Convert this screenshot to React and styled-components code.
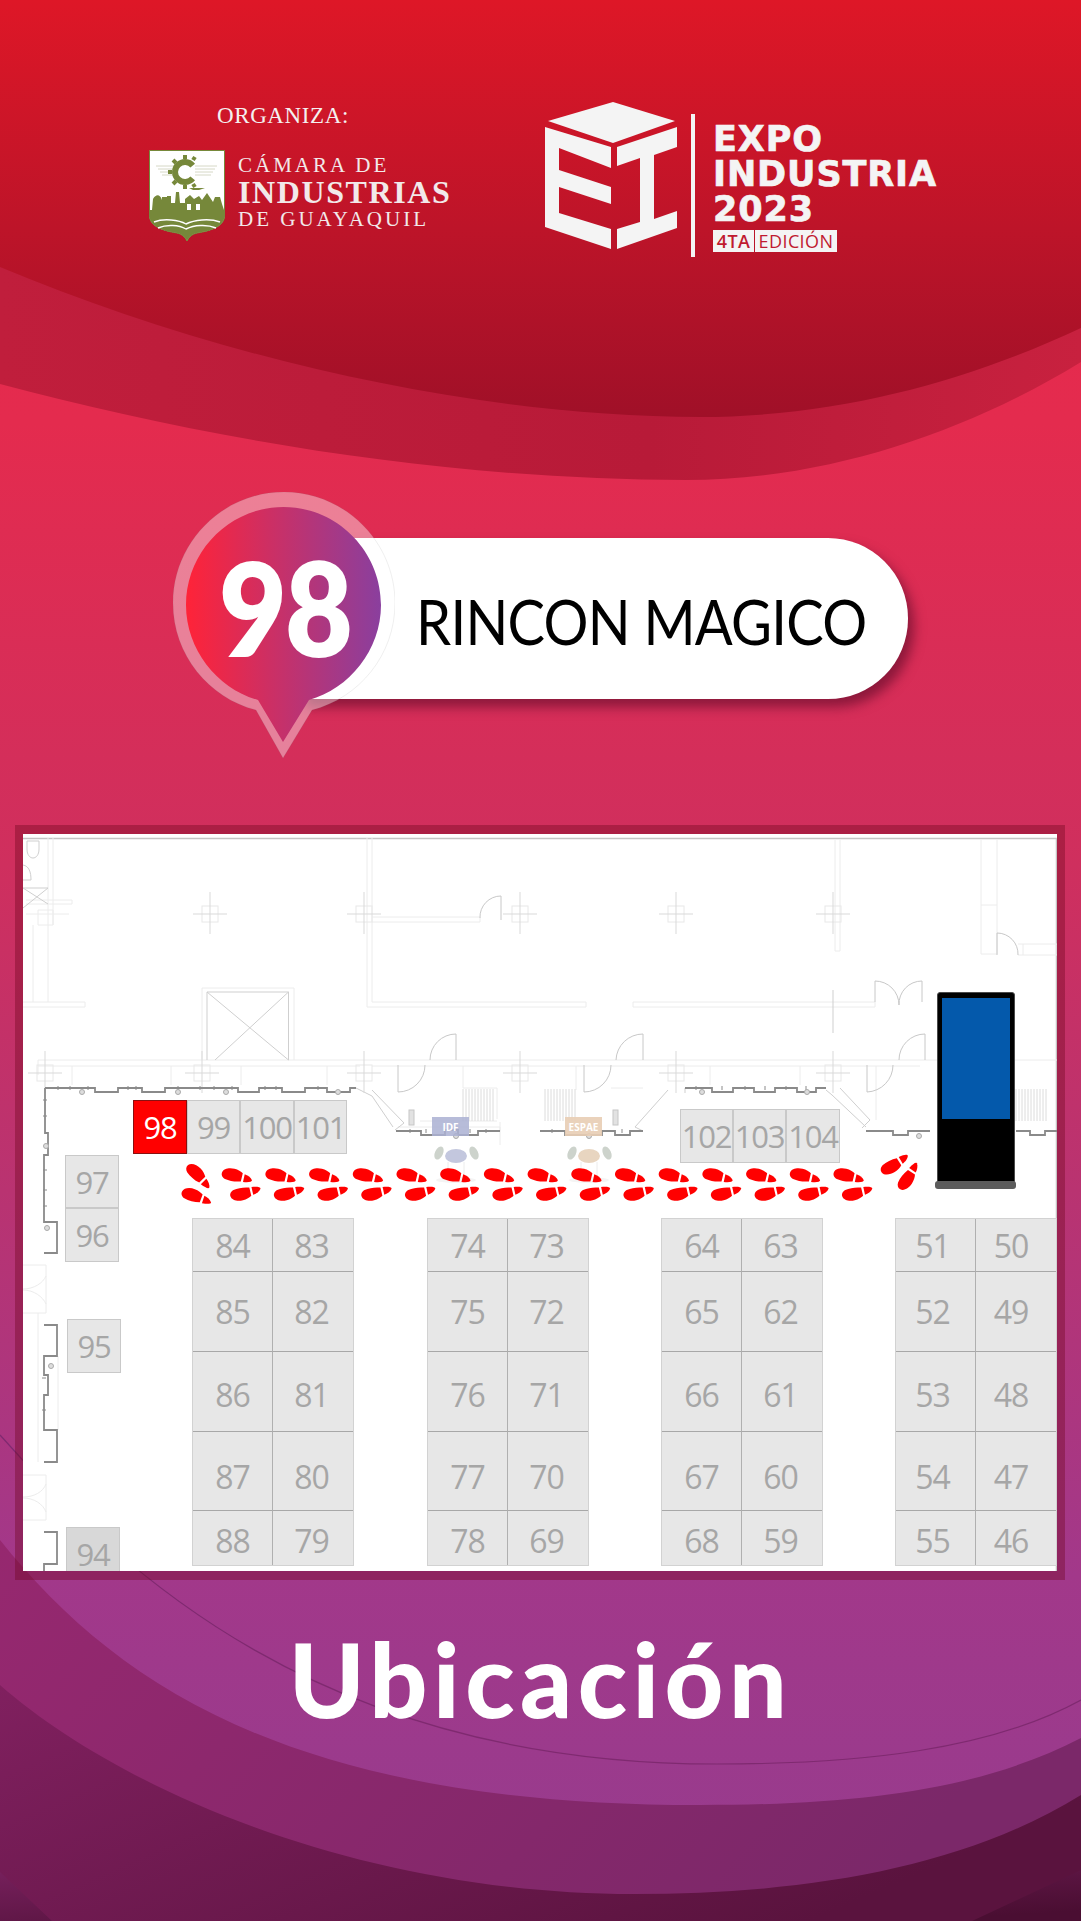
import React from "react";
import styled, { createGlobalStyle } from "styled-components";

const GlobalStyle = createGlobalStyle`
    html, body {
        margin: 0;
        padding: 0;
        background: #fff;
    }
`

const Page = styled.div`
    position: relative;
    width: 1081px;
    height: 1921px;
    overflow: hidden;
    display: flex;
    flex-direction: column;
    background: linear-gradient(180deg, #e82a4c 0%, #e42b4e 22%, #cf2f5e 45%, #b93371 62%, #a2388a 82%, #953c8e 100%);
    font-family: "Open Sans", sans-serif;
`

const Backdrop = styled.svg`
    position: absolute;
    inset: 0;
`

/* header */
const Header = styled.header`
    position: relative;
    height: 300px;
    box-sizing: border-box;
    padding: 101px 0 0 149px;
    display: flex;
    align-items: flex-start;
    gap: 74px;
`

const Organizer = styled.div`
    width: 322px;
    display: flex;
    flex-direction: column;
`

const OrganizerLabel = styled.div`
    margin-left: 68px;
    height: 30px;
    font-family: "Liberation Serif", serif;
    font-size: 23px;
    line-height: 30px;
    letter-spacing: 0.6px;
    color: #f4f0f0;
`

const OrganizerBody = styled.div`
    margin-top: 19px;
    display: flex;
    gap: 13px;
`

const OrganizerName = styled.div`
    display: flex;
    flex-direction: column;
    padding-top: 2px;
    font-family: "Liberation Serif", serif;
    color: #f2e9ea;
    white-space: nowrap;
`

const NameLine = styled.div`
    font-size: ${(props) => props.$size}px;
    line-height: ${(props) => props.$line}px;
    letter-spacing: ${(props) => props.$spacing}px;
    font-weight: ${(props) => (props.$bold ? 700 : 400)};
`

const Expo = styled.div`
    display: flex;
    align-items: flex-start;
    margin-top: 1px;
`

const ExpoText = styled.div`
    margin: 20px 0 0 14px;
    display: flex;
    flex-direction: column;
    color: #f4f4f4;
    font-family: "DejaVu Sans", sans-serif;
    font-weight: 700;
    font-size: 35px;
    line-height: 35px;
    letter-spacing: 0.9px;
    -webkit-text-stroke: 0.7px #f4f4f4;
`

const Edition = styled.div`
    margin-top: 3px;
    display: flex;
    gap: 1px;
    font-family: "Open Sans", sans-serif;
    font-size: 18px;
    letter-spacing: 0.4px;
    color: #c01a30;
    -webkit-text-stroke: 0;
`

const EditionBox = styled.span`
    width: ${(props) => props.$width}px;
    height: 22px;
    line-height: 22px;
    text-align: center;
    font-weight: ${(props) => (props.$strong ? 600 : 400)};
    background: #f4f4f4;
`

/* name pill */
const Pill = styled.section`
    position: relative;
    width: 608px;
    height: 161px;
    margin: 238px 0 0 300px;
    box-sizing: border-box;
    padding: 4px 0 0 116px;
    display: flex;
    align-items: center;
    background: #fff;
    border-radius: 0 80px 80px 0;
    box-shadow: 6px 8px 12px rgba(90, 10, 40, 0.6);
`

const StandName = styled.div`
    font-family: "Lato", sans-serif;
    font-size: 62px;
    letter-spacing: -0.8px;
    color: #000;
    white-space: nowrap;
    transform: scaleX(0.905);
    transform-origin: left center;
`

const Bubble = styled.div`
    position: absolute;
    left: -127px;
    top: -46px;
    width: 222px;
    height: 266px;
`

const BubbleShape = styled.svg`
    position: absolute;
    inset: 0;
`

const BubbleNumber = styled.div`
    position: absolute;
    left: 1px;
    top: 4px;
    width: 222px;
    height: 222px;
    display: flex;
    align-items: center;
    justify-content: center;
    font-family: "Lato", sans-serif;
    font-weight: 800;
    font-size: 130px;
    letter-spacing: -2px;
    color: #fff;
    transform: scaleX(0.9);
`

/* map */
const Frame = styled.section`
    position: relative;
    width: 1050px;
    height: 755px;
    margin: 126px 0 0 15px;
    box-sizing: border-box;
    padding: 9px 8px;
    background: rgba(110, 5, 30, 0.38);
`

const Map = styled.div`
    position: relative;
    width: 1034px;
    height: 737px;
    overflow: hidden;
    background: #fff;
`

const Plan = styled.svg`
    position: absolute;
    inset: 0;
`

const Booth = styled.div`
    position: absolute;
    left: ${(props) => props.$x - 23}px;
    top: ${(props) => props.$y - 834}px;
    width: ${(props) => props.$w}px;
    height: ${(props) => props.$h}px;
    box-sizing: border-box;
    display: flex;
    align-items: center;
    justify-content: center;
    background: ${(props) => (props.$active ? "#ff0000" : props.$dark ? "#d8d8d8" : "#e7e7e7")};
    border: 1px solid ${(props) => (props.$active ? "#8a1010" : "#c9c9c9")};
    color: ${(props) => (props.$active ? "#fff" : "#a6a6a6")};
    font-size: 31px;
    letter-spacing: -1.2px;
`

const BoothBlock = styled.div`
    position: absolute;
    left: ${(props) => props.$x - 23}px;
    top: ${(props) => props.$y - 834}px;
    display: grid;
    grid-template-columns: 80px 80px;
    grid-template-rows: 53px 80px 80px 79px 54px;
    background: #e7e7e7;
    border: 1px solid #d2d2d2;
`

const Cell = styled.div`
    display: flex;
    align-items: center;
    justify-content: center;
    box-sizing: border-box;
    padding-top: ${(props) => props.$drop}px;
    padding-right: ${(props) => props.$inset}px;
    border-right: ${(props) => (props.$left ? "1px solid #b0b0b0" : "0")};
    border-bottom: ${(props) => (props.$last ? "0" : "1px solid #a8a8a8")};
    color: #a6a6a6;
    font-size: 32px;
    letter-spacing: -1px;
`

const ServiceTag = styled.div`
    position: absolute;
    left: ${(props) => props.$x - 23}px;
    top: 283px;
    width: 37px;
    height: 19px;
    display: flex;
    align-items: center;
    justify-content: center;
    background: ${(props) => props.$color};
    color: #fff;
    font-size: 10px;
    font-weight: 700;
`

const Kiosk = styled.div`
    position: absolute;
    left: 914px;
    top: 158px;
    width: 78px;
    height: 190px;
    box-sizing: border-box;
    padding: 5px 4px 0;
    background: #000;
    border: 1px solid #4a4a4a;
    border-radius: 3px 3px 0 0;
`

const KioskScreen = styled.div`
    height: 121px;
    background: #0459ab;
`

const KioskBase = styled.div`
    position: absolute;
    left: 912px;
    top: 347px;
    width: 81px;
    height: 8px;
    border-radius: 3px;
    background: #5c5c5c;
`

const Title = styled.h1`
    position: relative;
    margin: 34px 0 0;
    text-align: center;
    font-family: "Lato", sans-serif;
    font-weight: 900;
    font-size: 102px;
    line-height: 130px;
    letter-spacing: 5.500px;
    color: #fff;
`

const sideBooths = [
    { n: "98", x: 133, y: 1100, w: 54, h: 54, active: true },
    { n: "99", x: 187, y: 1100, w: 53, h: 54 },
    { n: "100", x: 240, y: 1100, w: 54, h: 54 },
    { n: "101", x: 294, y: 1100, w: 53, h: 54 },
    { n: "102", x: 680, y: 1109, w: 53, h: 54 },
    { n: "103", x: 733, y: 1109, w: 53, h: 54 },
    { n: "104", x: 786, y: 1109, w: 54, h: 54 },
    { n: "97", x: 65, y: 1155, w: 54, h: 53 },
    { n: "96", x: 65, y: 1208, w: 54, h: 54 },
    { n: "95", x: 67, y: 1319, w: 54, h: 54 },
    { n: "94", x: 66, y: 1527, w: 54, h: 54, dark: true },
]

const blocks = [
    { x: 192, y: 1218, inset: [0, 3], rows: [[84, 83], [85, 82], [86, 81], [87, 80], [88, 79]] },
    { x: 427, y: 1218, inset: [0, 3], rows: [[74, 73], [75, 72], [76, 71], [77, 70], [78, 69]] },
    { x: 661, y: 1218, inset: [0, 3], rows: [[64, 63], [65, 62], [66, 61], [67, 60], [68, 59]] },
    { x: 895, y: 1218, inset: [6, 10], rows: [[51, 50], [52, 49], [53, 48], [54, 47], [55, 46]] },
]

// the numbers do not sit quite in the middle of the taller rows
const rowDrop = [0, 0, 6, 10, 4]

const columnMarks = [
    [210, 914], [364, 914], [520, 914], [676, 914], [833, 914],
    [45, 1073], [202, 1073], [364, 1073], [520, 1073], [676, 1073], [833, 1073],
]

// door: hinge post and swing arc
const doors = [
    "M456 1034V1060M456 1034A26 26 0 0 0 430 1060",
    "M398 1065V1092M398 1092A27 27 0 0 0 425 1065",
    "M643 1034V1060M643 1034A27 27 0 0 0 616 1060",
    "M584 1065V1092M584 1092A27 27 0 0 0 611 1065",
    "M925 1034V1060M925 1034A26 26 0 0 0 899 1060",
    "M867 1065V1092M867 1092A27 27 0 0 0 893 1065",
    "M875 981V1002M875 981A24 24 0 0 1 899 1005",
    "M922 981V1002M922 981A23 23 0 0 0 899 1005",
    "M997 933V955M997 933A21 21 0 0 1 1018 955",
    "M501 896V920M501 896A21 21 0 0 0 480 918",
]

const faintLines = [
    "M23 1002H85V1007H23",
    "M367 838V1007H586V1002H372V838",
    "M633 1002H875V1007H633Z",
    "M372 917H480V922H372",
    "M33 925V1002M48 838V1002M53 838V925",
    "M26 914H69M38 910H53V925H38Z",
    "M38 1060H1057M38 1060V1075M38 1066H360M372 1066H920",
    "M202 988H294V1060M202 988V1060",
    "M835 840V951H840V840M981 840V954H997V840M981 905H997",
    "M1018 944H1057M1018 955H1057V944M1023 944V955",
    "M463 1066V1088H497V1119M576 1066V1090M611 1088H643M876 1066V1120",
    "M398 1127H500V1131M500 1122V1145M420 1121H497",
    "M72 1066V1085M171 1066V1085M241 1066V1085M327 1066V1085M710 1066V1085M800 1066V1085",
    "M26 900H72V904H26",
    // rooms along the left wall, at the foot of the plan
    "M23 1265H46V1313H23M23 1289C34 1289 43 1283 46 1276M23 1290C34 1290 43 1297 46 1304",
    "M23 1475H46V1520H23M23 1497C34 1497 43 1492 46 1484M23 1498C34 1498 43 1504 46 1512",
    "M38 1313V1462M58 1356V1430",
]

const planLines = [
    "M207 992H288.500V1060M207 992V1060M207 992L288.500 1060M288.500 992L215 1060",
    "M356 1088L372 1096L393 1127M372 1090L404 1123L395 1130",
    "M668 1090L635 1127L643 1131M685 1088L685 1093M826 1090L832 1095L866 1127",
    "M840 1088L870 1120L862 1128",
    "M833 990V1033",
    "M27 841H39V849C39 861 27 861 27 849Z",
    "M23 865C29 866 31 872 31 880H23M23 888H48L23 908M23 888L48 904",
]

const wallPaths = [
    "M45 1088H95V1092H118V1088H142V1092H165V1088H238V1092H259V1088H282V1092H305V1088H327V1092H350V1088H356",
    "M396 1131H421V1135H445V1130H458V1135H478V1131H500",
    "M540 1131H565V1135H602V1131H615V1135H630V1131H643",
    "M685 1088H712V1092H733V1088H754V1092H775V1088H797V1092H816V1088H826",
    "M866 1131H893V1135H908V1131H930",
    "M1016 1131H1030V1135H1045V1131H1057",
    "M45 1088V1133H48V1155H44V1222H57V1253H44",
    "M44 1325H57V1356H44V1375H48V1395H44V1430H57V1462H44",
    "M44 1532H57V1564H44V1571",
]

const wallTicks = [
    "M58 1086V1090M70 1086V1090M88 1086V1090M128 1086V1090M136 1086V1090M178 1086V1090M200 1086V1090M214 1086V1090M232 1086V1090M265 1086V1090M276 1086V1090M318 1086V1090",
    "M410 1129V1133M426 1129V1133M470 1129V1133M486 1129V1133M552 1129V1133M622 1129V1133M696 1086V1090M722 1086V1090M745 1086V1090M765 1086V1090M786 1086V1090M806 1086V1090",
    "M43 1100H47M43 1116H47M43 1170H47M43 1190H47M43 1206H47M42 1378H46M42 1410H46",
]

const columns = [[82, 1092], [178, 1092], [226, 1092], [338, 1092], [702, 1092], [807, 1092], [456, 1136], [589, 1136], [919, 1136], [46, 1146], [47, 1228], [51, 1366]]

const stairs = [463, 545, 1016]
const topFeet = Array.from({ length: 15 }, (_, i) => 221.5 + i * 43.7)
const bottomFeet = Array.from({ length: 15 }, (_, i) => 230 + i * 43.7)

const Foot = ({ transform }) => (
    <g transform={transform} fill="#ff0000">
        <path d="M0.500 4.500C2 0.500 8 -0.500 13 0.800C16.500 1.700 19.800 3.700 21.300 5.300L19.300 13.400C14 14 8 13 3.500 11C1 9.700 -0.500 7 0.500 4.500Z" />
        <path d="M23.200 6.300C26 7.300 29.500 9.500 30.500 12.300C30.500 14 27 14.500 21.500 14Z" />
    </g>
)

const Table = ({ x, color }) => (
    <g>
        <path d={`M${x - 8} 1162V1180M${x + 8} 1162V1180`} stroke="#ececec" fill="none" />
        <ellipse cx={x} cy="1180" rx="20" ry="3" fill="#f4f4f4" />
        <ellipse cx={x - 17} cy="1153" rx="4" ry="7" fill="#cdd3cc" transform={`rotate(25 ${x - 17} 1153)`} />
        <ellipse cx={x + 18} cy="1153" rx="4" ry="7" fill="#cdd3cc" transform={`rotate(-25 ${x + 18} 1153)`} />
        <ellipse cx={x} cy="1156" rx="11" ry="7" fill={color} />
    </g>
)

const FloorPlan = () => (
    <Plan width="1034" height="737" viewBox="23 834 1034 737">
        <path d="M23 838.500H1057M1056.500 838V1571" stroke="#c4c4c4" strokeWidth="1.500" fill="none" />
        {faintLines.map((d, i) => <path key={i} d={d} stroke="#ececec" fill="none" />)}
        {planLines.map((d, i) => <path key={i} d={d} stroke="#cfcfcf" fill="none" />)}
        {doors.map((d, i) => <path key={i} d={d} stroke="#c8c8c8" fill="none" />)}
        {columnMarks.map(([x, y]) => (
            <g key={`${x}-${y}`} fill="none">
                <rect x={x - 8} y={y - 8} width="16" height="16" stroke="#e8e8e8" />
                <path d={`M${x - 17} ${y}H${x + 17}M${x} ${y - 22}V${y + 20}`} stroke="#d9d9d9" />
            </g>
        ))}
        {stairs.map((x) => (
            <g key={x} stroke="#dcdcdc">
                {Array.from({ length: 11 }, (_, i) => <path key={i} d={`M${x + i * 3} 1089V1121`} />)}
            </g>
        ))}
        {wallPaths.map((d, i) => <path key={i} d={d} stroke="#8a8a8a" strokeWidth="1.800" fill="none" />)}
        {wallTicks.map((d, i) => <path key={i} d={d} stroke="#8a8a8a" fill="none" />)}
        {columns.map(([x, y]) => <circle key={`${x}-${y}`} cx={x} cy={y} r="2.500" fill="#ddd" stroke="#aaa" />)}
        <rect x="409" y="1110" width="5" height="15" fill="#e2e2e2" stroke="#c6c6c6" />
        <rect x="613" y="1110" width="5" height="15" fill="#e2e2e2" stroke="#c6c6c6" />
        <Table x={456} color="#c3c7de" />
        <Table x={589} color="#e8d5c0" />
    </Plan>
)

const Trail = () => (
    <Plan width="1034" height="737" viewBox="23 834 1034 737">
        <Foot transform="translate(190 1161) rotate(32)" />
        <Foot transform="translate(182 1187) rotate(6)" />
        {topFeet.map((x) => <Foot key={x} transform={`translate(${x} 1168)`} />)}
        {bottomFeet.map((x) => <Foot key={x} transform={`translate(${x} 1201) scale(1 -1)`} />)}
        <Foot transform="translate(882 1175) rotate(-18) scale(1 -1) translate(0 -2)" />
        <Foot transform="translate(903 1193) rotate(-43) scale(1 -1)" />
    </Plan>
)

const Shield = () => (
    <svg width="76" height="91" viewBox="0 0 76 91">
        <path d="M0.500 0.500H75.500V66C75.500 76 62 81 48 83C43 84 40 87 38 91C36 87 33 84 28 83C14 81 0.500 76 0.500 66Z" fill="#fff" stroke="#76883a" />
        <path d="M7 16H25M9 19H25M11 22H25M13 25H25M46 16H68M46 19H66M46 22H64M46 25H62" stroke="#d6d8c6" />
        <g fill="none" stroke="#76883a">
            <path d="M43.700 15.600A10 10 0 1 0 43.700 28.400" strokeWidth="6" />
            <path d="M36 9V5M27 13L24 10M23 22H19M27 31L24 34M36 35V39M44 10L46 7M44 34L46 37" strokeWidth="4" />
        </g>
        <path d="M40 38H56L50 40H44Z" fill="#76883a" />
        <path d="M0.500 60H75.500V66C75.500 76 62 81 48 83C43 84 40 87 38 91C36 87 33 84 28 83C14 81 0.500 76 0.500 66ZM3 60L4 49C7 44 11 44 13 50V47H18V46H22V53H26L27 42H30L31 53H36V49L41 45L45 49L50 46L53 50L58 43L64 52L66 47H71L73 54L75 60Z" fill="#76883a" />
        <g fill="none" stroke="#fff" strokeWidth="1.400">
            <path d="M5 72C15 68 30 70 37 74C45 70 60 68 71 72" />
            <path d="M9 78C18 74 30 75 37 79C45 75 58 74 67 78" />
        </g>
        <g fill="#fff">
            <rect x="38" y="54" width="4" height="6" />
            <rect x="47" y="54" width="4" height="6" />
        </g>
    </svg>
)

const ExpoMark = () => (
    <svg width="154" height="156" viewBox="0 0 154 156">
        <g fill="#f4f4f4">
            <path d="M3 19L68 0L130 19L68 41Z" />
            <path d="M0 25L66 45V66L14 46V68L66 85V102L14 85V111L66 127V147L0 125Z" />
            <path d="M72 45L132 25V45L109 53V117L132 109V126L72 147V127L95 120V56L72 64Z" />
            <rect x="146" y="12" width="4" height="143" />
        </g>
    </svg>
)

const App = () => {
    return (
        <Page>
            <GlobalStyle />
            <Backdrop width="1081" height="1921" viewBox="0 0 1081 1921">
                <defs>
                    <linearGradient id="head" x1="0" y1="0" x2="0" y2="1">
                        <stop offset="0" stopColor="#de1727" />
                        <stop offset="0.55" stopColor="#bd1429" />
                        <stop offset="1" stopColor="#a01028" />
                    </linearGradient>
                    <linearGradient id="band" x1="0" y1="0" x2="1" y2="0">
                        <stop offset="0" stopColor="#c01e3c" />
                        <stop offset="0.6" stopColor="#b81a38" />
                        <stop offset="1" stopColor="#c8213f" />
                    </linearGradient>
                    <linearGradient id="waveA" x1="0" y1="0" x2="1" y2="0.300">
                        <stop offset="0" stopColor="#96286f" />
                        <stop offset="1" stopColor="#7b2869" />
                    </linearGradient>
                    <linearGradient id="waveB" x1="0" y1="0" x2="1" y2="0.500">
                        <stop offset="0" stopColor="#80205f" />
                        <stop offset="1" stopColor="#5a133e" />
                    </linearGradient>
                    <linearGradient id="waveC" x1="0" y1="0" x2="1" y2="0.800">
                        <stop offset="0" stopColor="#76205c" />
                        <stop offset="1" stopColor="#4a0e32" />
                    </linearGradient>
                </defs>
                <path d="M0 384C210 440 450 480 686 480C830 480 970 430 1081 362V0H0Z" fill="url(#band)" />
                <path d="M0 267C210 355 470 417 700 417C840 417 970 380 1081 328V0H0Z" fill="url(#head)" />
                <path d="M0 1540C120 1690 300 1805 700 1805C860 1805 980 1790 1081 1738V1921H0Z" fill="url(#waveA)" />
                <path d="M0 1685C120 1790 360 1894 634 1894C800 1894 960 1870 1081 1795V1921H0Z" fill="url(#waveB)" />
                <path d="M0 1872L52 1921H0Z M972 1921L1081 1870V1921Z" fill="url(#waveC)" />
                <path d="M0 1435C120 1570 320 1764 717 1764C860 1764 990 1750 1081 1700" fill="none" stroke="#7f2a70" strokeWidth="1.200" />
            </Backdrop>

            <Header>
                <Organizer>
                    <OrganizerLabel>ORGANIZA:</OrganizerLabel>
                    <OrganizerBody>
                        <Shield />
                        <OrganizerName>
                            <NameLine $size={21} $line={27} $spacing={3}>CÁMARA DE</NameLine>
                            <NameLine $size={32} $line={26} $spacing={1.600} $bold>INDUSTRIAS</NameLine>
                            <NameLine $size={21} $line={29} $spacing={3}>DE GUAYAQUIL</NameLine>
                        </OrganizerName>
                    </OrganizerBody>
                </Organizer>
                <Expo>
                    <ExpoMark />
                    <ExpoText>
                        <span>EXPO</span>
                        <span>INDUSTRIA</span>
                        <span>2023</span>
                        <Edition>
                            <EditionBox $width={41} $strong>4TA</EditionBox>
                            <EditionBox $width={82}>EDICIÓN</EditionBox>
                        </Edition>
                    </ExpoText>
                </Expo>
            </Header>

            <Pill>
                <Bubble>
                    <BubbleShape width="222" height="266" viewBox="0 0 222 266">
                        <defs>
                            <linearGradient id="pin" x1="0" y1="0" x2="1" y2="0">
                                <stop offset="0" stopColor="#ff2338" />
                                <stop offset="1" stopColor="#8a3f9e" />
                            </linearGradient>
                        </defs>
                        <path d="M83 218C36 206 0 163 0 111C0 50 50 0 111 0C172 0 222 50 222 111C222 163 186 206 139 218L110 266Z" fill="rgba(255,255,255,0.4)" stroke="rgba(120,120,120,0.12)" />
                        <path d="M85 208C45 197 13 158 13 113C13 59 57 15 110.500 15C164 15 208 59 208 113C208 158 176 197 136 208L110 250Z" fill="url(#pin)" />
                    </BubbleShape>
                    <BubbleNumber>98</BubbleNumber>
                </Bubble>
                <StandName>RINCON MAGICO</StandName>
            </Pill>

            <Frame>
                <Map>
                    <FloorPlan />
                    <ServiceTag $x={432} $color="rgba(170,176,210,0.85)">IDF</ServiceTag>
                    <ServiceTag $x={565} $color="rgba(232,205,180,0.9)">ESPAE</ServiceTag>
                    {sideBooths.map((b) => (
                        <Booth key={b.n} $x={b.x} $y={b.y} $w={b.w} $h={b.h} $active={b.active} $dark={b.dark}>{b.n}</Booth>
                    ))}
                    {blocks.map((block) => (
                        <BoothBlock key={block.x} $x={block.x} $y={block.y}>
                            {block.rows.map((row, r) => row.map((n, c) => (
                                <Cell key={n} $left={c === 0} $last={r === block.rows.length - 1} $drop={rowDrop[r]} $inset={block.inset[c]}>{n}</Cell>
                            )))}
                        </BoothBlock>
                    ))}
                    <Trail />
                    <Kiosk>
                        <KioskScreen />
                    </Kiosk>
                    <KioskBase />
                </Map>
            </Frame>

            <Title>Ubicación</Title>
        </Page>
    )
}

export default App;
